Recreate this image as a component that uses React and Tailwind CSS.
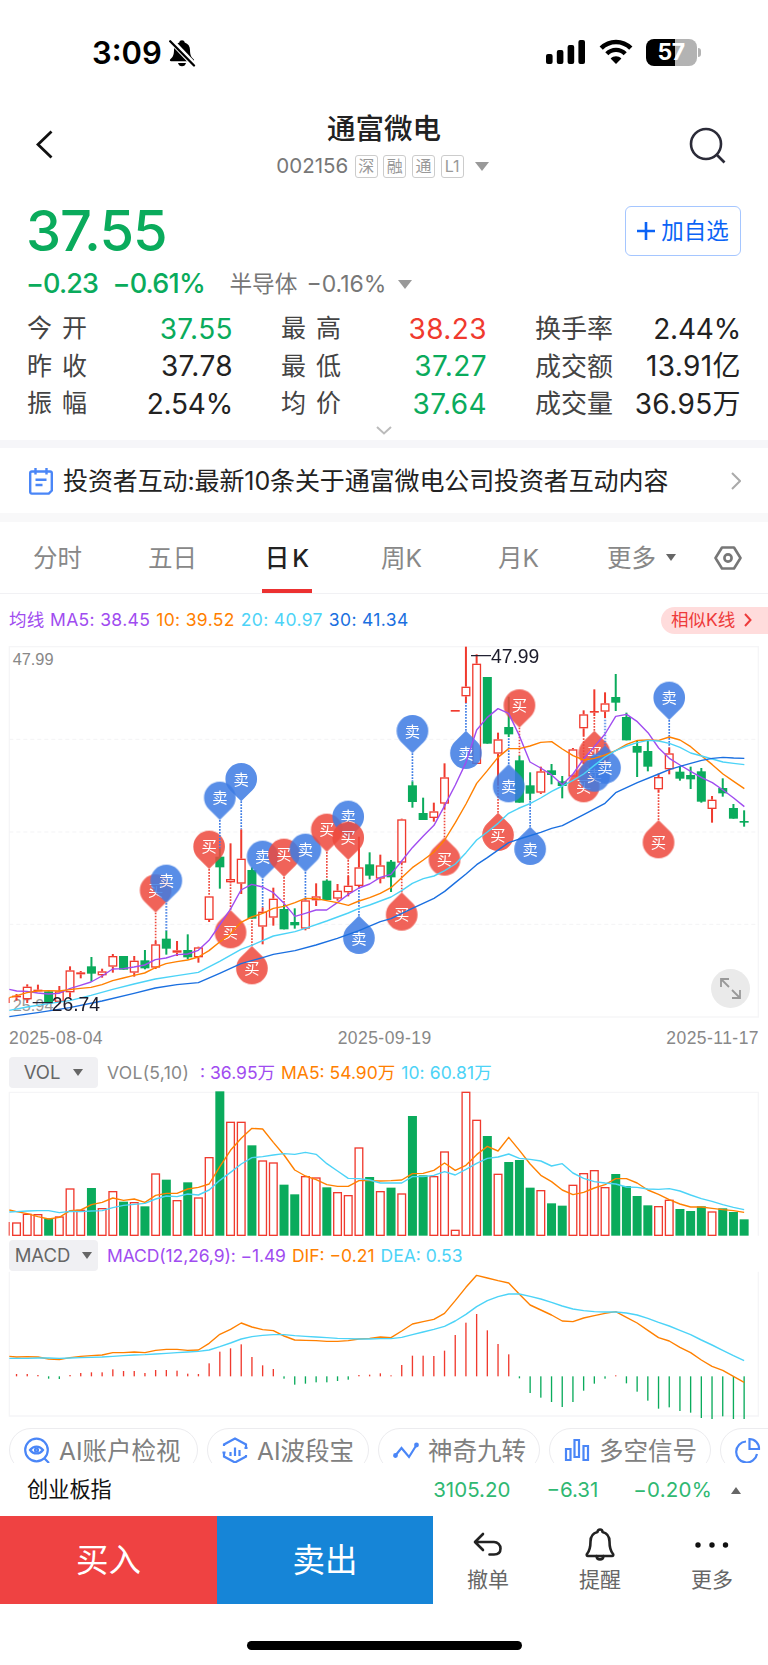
import React from 'react';

const UP = '#f03a2e';
const DOWN = '#0aab5c';

// All chart coordinates are in thirds of a pixel
const xAt = (i) => 49.6 + 32.1 * i;

// [direction, high, body top, body bottom, low, volume top]
const candles = [
  ['u', 1062, 1067, 1072, 1082, 608], ['u', 1033, 1040, 1078, 1089, 582], ['u', 1034, 1049, 1054, 1054, 583],
  ['d', 1054, 1054, 1089, 1089, 595], ['u', 1038, 1054, 1086, 1092, 590], ['u', 979, 991, 1057, 1072, 506],
  ['u', 993, 997, 1003, 1015, 570], ['d', 951, 979, 1001, 1025, 504], ['u', 986, 994, 1006, 1013, 565],
  ['u', 942, 948, 980, 998, 514], ['d', 948, 948, 989, 989, 545], ['u', 948, 962, 998, 1010, 547],
  ['d', 930, 961, 985, 988, 559], ['u', 903, 913, 983, 987, 461], ['d', 872, 896, 926, 944, 479],
  ['u', 903, 931, 938, 948, 541], ['d', 883, 930, 952, 958, 487], ['u', 920, 922, 952, 968, 533],
  ['u', 769, 769, 840, 846, 412], ['d', 625, 650, 682, 746, 214], ['u', 610, 717, 727, 730, 306],
  ['u', 568, 656, 731, 762, 306], ['d', 682, 690, 836, 836, 376], ['u', 802, 815, 860, 913, 422],
  ['u', 743, 776, 833, 857, 428], ['d', 795, 807, 868, 868, 494], ['d', 805, 846, 856, 866, 523],
  ['u', 776, 781, 866, 871, 469], ['u', 730, 769, 781, 798, 473], ['d', 718, 722, 780, 780, 502],
  ['u', 732, 752, 776, 782, 517], ['u', 708, 737, 757, 769, 526], ['u', 590, 682, 738, 743, 383],
  ['d', 637, 673, 707, 718, 471], ['u', 644, 676, 716, 730, 514], ['d', 660, 665, 712, 756, 503],
  ['u', 536, 538, 668, 672, 521], ['d', 424, 436, 486, 503, 288], ['d', 473, 519, 540, 540, 466],
  ['u', 488, 514, 534, 545, 469], ['u', 370, 412, 491, 509, 395], ['u', 210, 210, 213, 213, 630],
  ['u', 20, 140, 169, 189, 216], ['u', 43, 71, 372, 372, 300], ['d', 111, 111, 311, 311, 348],
  ['u', 278, 298, 341, 437, 462], ['d', 170, 261, 283, 291, 426], ['d', 347, 361, 488, 488, 420],
  ['d', 397, 436, 461, 481, 503], ['u', 380, 394, 458, 462, 511], ['d', 372, 391, 405, 433, 550],
  ['d', 408, 424, 438, 475, 557], ['u', 324, 328, 410, 410, 495], ['u', 211, 223, 265, 289, 460],
  ['u', 148, 213, 218, 228, 451], ['u', 157, 190, 215, 234, 502], ['d', 102, 171, 188, 213, 462],
  ['d', 218, 231, 301, 301, 498], ['d', 303, 318, 338, 411, 528], ['d', 300, 333, 380, 394, 556],
  ['u', 401, 411, 448, 458, 559], ['u', 322, 340, 388, 403, 540], ['d', 380, 395, 416, 422, 567],
  ['d', 380, 405, 418, 447, 573], ['d', 384, 394, 485, 488, 559], ['u', 468, 479, 507, 548, 575],
  ['d', 415, 444, 460, 470, 565], ['d', 492, 504, 536, 536, 576], ['d', 511, 543, 548, 560, 598],
];

const ma5 = '28,1048 50,1053 81,1054 113,1059 145,1062 177,1060 209,1046 241,1036 273,1026 306,1008 338,987 370,986 402,981 434,975 466,959 498,954 531,944 563,942 595,931 627,901 659,855 691,808 723,750 755,733 788,741 820,758 852,790 885,829 916,820 948,810 980,810 1012,788 1045,763 1077,744 1109,732 1141,712 1173,703 1205,663 1237,623 1270,588 1302,556 1334,497 1366,435 1398,367 1430,270 1462,232 1494,206 1526,220 1558,287 1590,366 1622,384 1654,404 1687,434 1719,402 1751,357 1783,320 1815,282 1847,229 1880,223 1912,245 1944,278 1976,324 2008,355 2040,375 2072,394 2105,413 2137,428 2169,450 2201,474 2233,500';
const ma10 = '28,1073 50,1067 81,1058 113,1053 145,1052 177,1053 209,1049 241,1045 273,1042 306,1034 338,1022 370,1014 402,1006 434,999 466,983 498,971 531,965 563,960 595,951 627,932 659,906 691,882 723,847 755,831 788,820 820,805 852,799 885,788 916,775 948,776 980,782 1012,788 1045,796 1077,783 1109,773 1141,760 1173,743 1205,713 1237,683 1270,660 1302,636 1334,600 1366,548 1398,492 1430,430 1462,392 1494,352 1526,326 1558,326 1590,318 1622,307 1655,305 1687,327 1719,347 1751,360 1783,355 1815,345 1847,332 1880,313 1912,301 1944,300 1976,301 2008,291 2040,300 2072,320 2105,348 2137,374 2169,402 2201,424 2233,446';
const ma20 = '28,1111 81,1101 145,1091 209,1082 273,1066 338,1048 402,1032 466,1017 531,1007 595,997 659,964 723,928 755,916 820,888 885,875 916,865 980,843 1045,819 1077,805 1109,795 1173,771 1205,752 1237,730 1270,716 1302,708 1334,692 1366,672 1398,638 1430,600 1462,576 1494,550 1526,520 1558,504 1590,491 1622,474 1655,454 1687,438 1719,421 1751,402 1783,376 1815,351 1847,332 1880,318 1912,308 1944,301 1976,303 2008,310 2040,322 2072,339 2105,348 2137,357 2169,366 2201,370 2233,374';
const ma30 = '28,1130 113,1118 209,1103 306,1083 402,1060 466,1044 531,1034 595,1028 659,1000 723,971 788,953 820,943 885,932 948,915 1012,895 1077,872 1141,845 1173,836 1237,805 1302,775 1334,754 1366,728 1398,702 1430,674 1462,653 1526,608 1558,597 1622,577 1655,565 1687,557 1751,524 1815,490 1847,458 1912,428 1976,402 2008,389 2040,379 2072,370 2105,361 2137,355 2169,352 2201,354 2233,355';

// [candle index, buy / sell, tip y, points up, y where the dotted line ends]
const pins = [
  [13, 'b', 818, 0, 903], [14, 's', 789, 0, 872], [18, 'b', 687, 0, 769], [19, 's', 540, 0, 625],
  [20, 'b', 810, 1, 730], [21, 's', 484, 0, 568], [22, 'b', 918, 1, 836], [23, 's', 717, 0, 802],
  [25, 'b', 711, 0, 795], [27, 's', 696, 0, 780], [29, 'b', 636, 0, 718], [31, 's', 597, 0, 597],
  [31, 'b', 660, 0, 708], [32, 's', 827, 1, 743], [36, 'b', 757, 1, 672], [37, 's', 340, 0, 424],
  [40, 'b', 592, 1, 509], [42, 's', 272, 1, 189], [45, 'b', 518, 1, 437], [46, 's', 372, 1, 291],
  [47, 'b', 263, 0, 347], [48, 's', 560, 1, 481], [53, 'b', 372, 1, 289], [54, 'b', 272, 1, 228],
  [54, 's', 340, 1, 340], [55, 's', 316, 1, 234], [60, 'b', 540, 1, 458], [61, 's', 240, 0, 322],
];

const volMa5 = [575, 581, 590, 597, 592, 572, 570, 554, 547, 534, 541, 537, 547, 526, 520, 520, 507, 502, 492, 440, 391, 355, 325, 327, 367, 405, 450, 468, 479, 494, 499, 499, 482, 482, 483, 482, 480, 461, 460, 451, 429, 451, 436, 404, 379, 393, 352, 391, 432, 466, 485, 510, 524, 517, 504, 494, 476, 476, 489, 510, 523, 539, 552, 561, 561, 565, 569, 572, 577];
const volMa10 = [575, 573, 572, 572, 578, 574, 575, 573, 572, 563, 556, 553, 550, 537, 528, 530, 522, 525, 510, 481, 457, 432, 413, 410, 405, 401, 403, 397, 403, 431, 453, 475, 476, 480, 489, 489, 489, 470, 470, 466, 455, 465, 448, 430, 415, 411, 402, 415, 418, 423, 438, 431, 459, 475, 485, 489, 492, 501, 502, 507, 508, 506, 513, 525, 536, 544, 554, 562, 569];
const macd = [402, 402, 405, 416, 417, 405, 399, 397, 397, 388, 393, 393, 399, 390, 390, 392, 401, 402, 370, 335, 325, 313, 351, 376, 387, 416, 434, 431, 427, 427, 423, 419, 405, 404, 400, 406, 375, 347, 347, 348, 332, 285, 248, 222, 271, 312, 343, 415, 459, 473, 486, 501, 486, 452, 431, 416, 406, 430, 455, 482, 506, 502, 513, 518, 534, 537, 529, 537, 537];
const dif = [351, 350, 351, 357, 359, 353, 349, 347, 345, 338, 338, 336, 338, 331, 328, 328, 331, 330, 310, 283, 268, 249, 261, 269, 272, 288, 300, 301, 302, 304, 304, 302, 297, 295, 291, 293, 273, 252, 245, 238, 220, 182, 142, 106, 114, 122, 129, 163, 195, 210, 225, 243, 245, 234, 227, 220, 215, 232, 249, 271, 293, 303, 322, 338, 360, 379, 391, 409, 427];
const dea = [355, 355, 354, 354, 355, 354, 353, 352, 351, 349, 347, 345, 344, 342, 340, 338, 336, 334, 330, 320, 309, 297, 290, 286, 284, 284, 287, 289, 291, 293, 295, 296, 297, 297, 296, 296, 292, 284, 276, 268, 259, 243, 223, 200, 182, 170, 162, 162, 169, 177, 187, 198, 207, 212, 215, 216, 216, 219, 225, 235, 247, 258, 271, 284, 300, 315, 331, 347, 362];

const toPoints = (first, values) => `28,${first} ` + values.map((v, i) => `${xAt(i)},${v}`).join(' ');

function Line({ points, color }) {
  return <polyline points={points} fill="none" stroke={color} strokeWidth="4.2" strokeLinejoin="round" />;
}

function Caret({ className, up }) {
  return (
    <svg className={className} viewBox="0 0 14 9" preserveAspectRatio="none">
      <path d={up ? 'M7 0l7 9H0z' : 'M0 0h14L7 9z'} fill="currentColor" />
    </svg>
  );
}

function StatusBar() {
  return (
    <div className="flex h-[100px] items-start justify-between pl-[92px] pr-[67px] pt-[38px]">
      <div className="flex items-center gap-[6px]">
        <span className="mt-px text-[31px] font-semibold leading-7">3:09</span>
        <svg className="h-7 w-7" viewBox="0 0 28 28">
          <path d="M14 1.2c1.400 0 2.500.9 2.700 2.200 3.500 1.100 5.300 4 5.300 7.600 0 5.400 1.500 7.400 3.700 9.300.8.800.4 2-.8 2H3.100c-1.200 0-1.600-1.200-.8-2C4.500 18.400 6 16.400 6 11c0-3.600 1.800-6.500 5.300-7.600C11.500 2.100 12.600 1.200 14 1.200zM10 24h8c-.4 2-2 3.300-4 3.300S10.400 26 10 24z" />
          <path d="M3.600 2.200l22.800 24" stroke="#fff" strokeWidth="5.600" />
          <path d="M2.200 2.200l23.800 24.300" stroke="#000" strokeWidth="2.300" strokeLinecap="round" />
        </svg>
      </div>
      <div className="flex items-center">
        <svg className="h-7 w-[40px]" viewBox="0 0 40 28">
          <rect x="0" y="16" width="6.600" height="10" rx="2" />
          <rect x="10.800" y="12" width="6.600" height="14" rx="2" />
          <rect x="21.600" y="7" width="6.600" height="19" rx="2" />
          <rect x="32.400" y="2" width="6.600" height="24" rx="2" />
        </svg>
        <svg className="ml-[13px] h-7 w-[34px]" viewBox="0 0 34 28">
          <path d="M2.200 10.200C10.500 1.900 23.500 1.900 31.800 10.200" fill="none" stroke="#000" strokeWidth="4.600" />
          <path d="M7.800 15.800c5.200-5.200 13.200-5.200 18.400 0" fill="none" stroke="#000" strokeWidth="4.400" />
          <path d="M17 26l-5.400-5.600c3-2.800 7.800-2.800 10.800 0z" />
        </svg>
        <div className="ml-[13px] flex h-[27px] w-[51px] items-center justify-center rounded-[8px] bg-linear-to-r from-black from-57% to-[#b3b3b3] to-57% text-[23px] font-bold leading-none tracking-[-0.5px] text-white">
          57
        </div>
        <div className="ml-[1.500px] h-[9px] w-[3px] rounded-r-full bg-[#b3b3b3]" />
      </div>
    </div>
  );
}

function Header() {
  return (
    <header className="flex h-[90px] justify-between px-[36px]">
      <div className="w-[43px]">
        <svg className="mt-[30px] h-[30px] w-[18px]" viewBox="0 0 18 30" fill="none" stroke="#111" strokeWidth="2.800">
          <path d="M15.500 1.500L2 14.500l13.500 13" />
        </svg>
      </div>
      <div className="flex flex-col items-center">
        <h1 className="mt-[11px] text-[28.500px] font-medium leading-[36px] text-[#222]">通富微电</h1>
        <div className="mr-[3px] mt-[7px] flex items-center text-[#999]">
          <span className="mr-[6.500px] text-[20.500px] leading-6 text-[#777]">002156</span>
          <div className="flex gap-[5.700px]">
            {['深', '融', '通', 'L1'].map((tag) => (
              <span key={tag} className="flex h-[23px] w-[23px] items-center justify-center rounded-[3px] border border-[#ccc] text-[16px] leading-none">
                {tag}
              </span>
            ))}
          </div>
          <Caret className="ml-[11px] h-[9px] w-[14px]" />
        </div>
      </div>
      <svg className="mt-[27px] mr-[5px] h-[38px] w-[38px]" viewBox="0 0 38 38" fill="none" stroke="#2b2b38" strokeWidth="2.600">
        <circle cx="17" cy="17" r="15" />
        <path d="M27.500 27.500l8 8" />
      </svg>
    </header>
  );
}

const quotes = [
  ['今开', '37.55', 'text-[#0aab5c]'], ['最高', '38.23', 'text-[#f03a2e]'], ['换手率', '2.44%', 'text-[#222]'],
  ['昨收', '37.78', 'text-[#222]'], ['最低', '37.27', 'text-[#0aab5c]'], ['成交额', '13.91亿', 'text-[#222]'],
  ['振幅', '2.54%', 'text-[#222]'], ['均价', '37.64', 'text-[#0aab5c]'], ['成交量', '36.95万', 'text-[#222]'],
];

function Quote() {
  return (
    <section className="h-[250px] pl-[27px] pr-[27px]">
      <div className="flex h-[67px] items-start justify-between">
        <div className="-ml-px mt-[13px] text-[56px] font-medium leading-[56px] tracking-[-1px] text-[#0aab5c]">37.55</div>
        <button className="mt-[16px] flex h-[50px] w-[116px] items-center justify-center gap-[6px] rounded-[6px] border-[1.500px] border-[#a5c6ff] text-[22.500px] text-[#0b63f6]">
          <svg className="h-[18px] w-[18px]" viewBox="0 0 18 18" stroke="currentColor" strokeWidth="2.600">
            <path d="M9 0v18M0 9h18" />
          </svg>
          <span>加自选</span>
        </button>
      </div>
      <div className="flex h-[53px] items-center pt-[2px] text-[#777]">
        <span className="-ml-px text-[27px] font-medium tracking-[-0.900px] text-[#0aab5c]">−0.23</span>
        <span className="ml-[14.500px] text-[27px] font-medium tracking-[-0.800px] text-[#0aab5c]">−0.61%</span>
        <span className="ml-[24.500px] text-[22.700px]">半导体</span>
        <span className="ml-[9px] text-[23px]">−0.16%</span>
        <Caret className="ml-[12px] h-[9px] w-[14px] text-[#999]" />
      </div>
      <div className="grid grid-cols-3 gap-x-12">
        {quotes.map(([label, value, color]) => (
          <div key={label} className="flex h-[37.500px] items-center justify-between">
            <span className={label.length === 2 ? 'text-[25px] tracking-[10px] text-[#444]' : 'text-[26px] text-[#444]'}>{label}</span>
            <span className={`text-[28px] ${value.includes('%') ? 'tracking-[-0.200px]' : 'tracking-[0.400px]'} ${color}`}>{value}</span>
          </div>
        ))}
      </div>
      <svg className="mx-auto mt-[3px] h-[9px] w-4" viewBox="0 0 16 9" fill="none" stroke="#bbb" strokeWidth="2">
        <path d="M1 1l7 6.500L15 1" />
      </svg>
    </section>
  );
}

function NewsRow() {
  return (
    <div className="flex h-[65px] items-center pl-[29px] pr-[27px]">
      <svg className="h-7 w-6" viewBox="0 0 24 28" fill="none" stroke="#4a86f7" strokeWidth="2.400">
        <path d="M2.800 4.500h18.400A1.600 1.600 0 0 1 22.800 6v17.500l-3 3.100h-17A1.600 1.600 0 0 1 1.200 25V6a1.600 1.600 0 0 1 1.600-1.500zM6.500 1v6.500M17.500 1v6.500M6.500 12.800h11M6.500 18h7" />
      </svg>
      <span className="ml-[10px] mt-[2px] text-[25px] tracking-[-0.110px] text-[#222]">投资者互动:最新10条关于通富微电公司投资者互动内容</span>
      <svg className="ml-auto h-[18px] w-[10px]" viewBox="0 0 10 18" fill="none" stroke="#aaa" strokeWidth="2">
        <path d="M1 1l8 8-8 8" />
      </svg>
    </div>
  );
}

function Tabs() {
  return (
    <nav className="flex h-[72px] items-center border-b border-[#f1f1f4] pl-[33px] pr-[26px] text-[24.500px] text-[#888]">
      <span className="mt-[2px] w-[115px]">分时</span>
      <span className="mt-[2px] w-[114px]">五日</span>
      <span className="relative flex h-full w-[50px] items-center justify-center gap-[3px] pt-[2px] font-medium text-[#222]">
        日<span>K</span>
        <i className="absolute bottom-0 left-0 h-1 w-[50px] bg-[#ec3131]" />
      </span>
      <span className="ml-[69px] mt-[2px] w-[117px]">周K</span>
      <span className="mt-[2px] w-[109px]">月K</span>
      <span className="mt-[2px]">更多</span>
      <Caret className="ml-[10px] h-[7px] w-[10px] text-[#666]" />
      <svg className="ml-auto h-6 w-7" viewBox="0 0 28 24" fill="none" stroke="#777" strokeWidth="2.600" strokeLinejoin="round">
        <path d="M8 1.500h12L26.500 12 20 22.500H8L1.500 12z" />
        <circle cx="14" cy="12" r="3.600" />
      </svg>
    </nav>
  );
}

function MaRow() {
  return (
    <div className="flex h-[46px] items-center justify-between pl-[9px] pt-[6px] text-[17.500px]">
      <div className="mt-px flex gap-[6px] tracking-[0.350px]">
        <span className="text-[#a04cf0]">均线 MA5: 38.45</span>
        <span className="text-[#ff8000]">10: 39.52</span>
        <span className="text-[#4cd3f7]">20: 40.97</span>
        <span className="text-[#1a6fe0]">30: 41.34</span>
      </div>
      <div className="flex h-[27px] w-[107px] items-center rounded-l-full bg-[#ffdcdc] pl-[10px] text-[17.500px] text-[#ee3a3a]">
        相似K线
        <svg className="ml-[9px] h-[14px] w-2" viewBox="0 0 8 14" fill="none" stroke="currentColor" strokeWidth="2">
          <path d="M1 1l5.500 6L1 13" />
        </svg>
      </div>
    </div>
  );
}

function Pin({ index, kind, tip, up, end }) {
  const x = xAt(index);
  const color = kind === 'b' ? '#ee4a3e' : '#3e7ce4';
  const cy = up ? tip + 67 : tip - 67;
  return (
    <g>
      <line x1={x} y1={tip} x2={x} y2={end} stroke={color} strokeWidth="5" strokeDasharray="5 4" />
      <g opacity="0.86" fill={color}>
        <path transform={`translate(${x} ${cy}) scale(1 ${up ? -1 : 1})`} d="M0 67L-33.500 33.500A47.500 47.500 0 1 1 33.500 33.500z" />
        <text x={x} y={cy + 17} fontSize="46" fill="#fff" textAnchor="middle" fontFamily="'Noto Sans CJK SC', sans-serif">
          {kind === 'b' ? '买' : '卖'}
        </text>
      </g>
    </g>
  );
}

function PriceChart() {
  return (
    <div className="relative">
      <svg className="block h-[380px] w-full" viewBox="0 0 2304 1140" fontFamily="'Liberation Sans', sans-serif">
        <rect x="28" y="20" width="2247" height="1111" fill="none" stroke="#f5f5f7" strokeWidth="4" />
        {[298, 576, 853].map((y) => (
          <line key={y} x1="28" y1={y} x2="2276" y2={y} stroke="#f3f3f5" strokeWidth="3" strokeDasharray="12 9" />
        ))}
        <text x="38" y="75" fontSize="49" fill="#888">47.99</text>
        <text x="38" y="1113" fontSize="49" fill="#999">25.94</text>
        <rect x="26" y="1073" width="3" height="16" fill={UP} />
        {candles.map(([dir, high, top, bottom, low], i) => {
          const x = xAt(i);
          const h = bottom - top;
          if (dir === 'd') {
            return (
              <g key={i} fill={DOWN}>
                <rect x={x - 3} y={high} width="6" height={low - high} />
                <rect x={x - 13.500} y={top} width="27" height={h} />
              </g>
            );
          }
          return (
            <g key={i} fill={UP}>
              <rect x={x - 3} y={high} width="6" height={Math.max(top - high, 0)} />
              <rect x={x - 3} y={bottom} width="6" height={Math.max(low - bottom, 0)} />
              {h < 9 ? (
                <rect x={x - 13.500} y={top} width="27" height={Math.max(h, 5)} />
              ) : (
                <rect x={x - 11.500} y={top + 2} width="23" height={h - 4} fill="#fff" stroke={UP} strokeWidth="4" />
              )}
            </g>
          );
        })}
        {pins.map(([index, kind, tip, up, end], n) => (
          <Pin key={n} index={index} kind={kind} tip={tip} up={up} end={end} />
        ))}
        <Line points={ma5} color="#a04cf0" />
        <Line points={ma10} color="#ff8000" />
        <Line points={ma20} color="#4cd3f7" />
        <Line points={ma30} color="#1a6fe0" />
        <path d="M1413 47h60M98 1088h60" stroke="#223" strokeWidth="4" />
        <text x="1473" y="69" fontSize="58" fill="#1c1c2b">47.99</text>
        <text x="155" y="1113" fontSize="58" fill="#1c1c2b">26.74</text>
      </svg>
      <button className="absolute left-[711px] top-[329px] flex h-[39px] w-[39px] items-center justify-center rounded-full bg-[#eaeaea]">
        <svg className="h-[21px] w-[21px]" viewBox="0 0 21 21" fill="none" stroke="#999" strokeWidth="1.800">
          <path d="M1 9V1h8M1 1l8 8M20 12v8h-8M20 20l-8-8" />
        </svg>
      </button>
    </div>
  );
}

function IndicatorHead({ name, caret, children }) {
  return (
    <div className="flex h-[31px] items-center pl-[9px] text-[17.500px]">
      <button className="flex h-[31px] w-[89px] items-center justify-center rounded-[4px] bg-[#f0f0f3] text-[18.500px] text-[#666]">
        <span className="mt-px">{name}</span>
        <Caret className={caret} />
      </button>
      <div className="ml-[9px] mt-[2px] flex gap-[6px] whitespace-pre">{children}</div>
    </div>
  );
}

function VolumeChart() {
  return (
    <svg className="block h-[148px] w-full" viewBox="0 210 2304 444">
      <path d="M28 647V217H2275V647" fill="none" stroke="#f5f5f7" strokeWidth="4" />
      <rect x="26" y="606" width="3" height="41" fill={UP} />
      {candles.map(([dir, , , , , top], i) =>
        dir === 'd' ? (
          <rect key={i} x={xAt(i) - 13.500} y={top} width="27" height={647 - top} fill={DOWN} />
        ) : (
          <rect key={i} x={xAt(i) - 11.500} y={top + 1} width="23" height={645 - top} fill="#fff" stroke={UP} strokeWidth="4" />
        )
      )}
      <Line points={toPoints(570, volMa5)} color="#ff8000" />
      <Line points={toPoints(576, volMa10)} color="#4cd3f7" />
    </svg>
  );
}

function MacdChart() {
  return (
    <svg className="block h-[150px] w-full" viewBox="0 93 2304 450">
      <path d="M28 95V528H2275V95" fill="none" stroke="#f5f5f7" strokeWidth="4" />
      {macd.map((v, i) => (
        <rect key={i} x={xAt(i) - 2} y={Math.min(v, 409)} width="4" height={Math.abs(v - 409)} fill={v < 409 ? UP : DOWN} />
      ))}
      <Line points={toPoints(349, dif)} color="#ff8000" />
      <Line points={toPoints(355, dea)} color="#4cd3f7" />
    </svg>
  );
}

const tools = [
  {
    name: 'AI账户检视',
    width: 'w-[189px]',
    icon: (
      <>
        <circle cx="12.500" cy="13" r="11.300" />
        <path d="M20 21l5 5M6 13c3.500-4.600 9.500-4.600 13 0-3.500 4.600-9.500 4.600-13 0z" />
        <circle cx="12.500" cy="13" r="1.500" />
      </>
    ),
  },
  {
    name: 'AI波段宝',
    width: 'w-[162px]',
    icon: (
      <>
        <path d="M2 9V7.500L13 1.500l11 6V11M2 15v4.500l11 6 11-6V18" />
        <path d="M8.500 15v4M13 10.500V19M17.500 13v6M.5 15.500h3M22.500 11h3" />
      </>
    ),
  },
  {
    name: '神奇九转',
    width: 'w-[162px]',
    icon: (
      <>
        <path d="M2 19l6.500-8 7.500 9L23.500 8" />
        <circle cx="2.500" cy="18.500" r="1.300" fill="currentColor" />
        <circle cx="23.500" cy="8" r="1.300" fill="currentColor" />
      </>
    ),
  },
  {
    name: '多空信号',
    width: 'w-[162px]',
    icon: <path d="M2 12h4.500v11H2zM10.500 3H15v17h-4.500zM19.500 9H24v14h-4.500z" />,
  },
  {
    name: '',
    width: 'w-[162px]',
    icon: (
      <>
        <path d="M11 4.500A10.500 10.500 0 1 0 22 17" />
        <path d="M14.500 2a9.500 9.500 0 0 1 9.500 10h-9.500z" />
      </>
    ),
  },
];

function ToolChips() {
  return (
    <div className="flex h-[42px] gap-[9px] overflow-hidden pl-[9px] pt-[7px]">
      {tools.map((tool, i) => (
        <div key={i} className={`flex h-[44px] shrink-0 items-center gap-[9px] whitespace-nowrap rounded-full border border-[#ececef] pl-[14px] text-[24.500px] text-[#808080] ${tool.width}`}>
          <svg className="h-[27px] w-[26px] shrink-0 text-[#4a86f7]" viewBox="0 0 26 27" fill="none" stroke="currentColor" strokeWidth="2.200">
            {tool.icon}
          </svg>
          <span className="mt-[2px]">{tool.name}</span>
        </div>
      ))}
    </div>
  );
}

function IndexBar() {
  return (
    <div className="flex h-[53px] items-center pl-[27px] pr-[27px] pt-px text-[20.500px] text-[#2fb872]">
      <span className="mr-auto text-[21.200px] text-[#111]">创业板指</span>
      <span>3105.20</span>
      <span className="ml-[36px]">−6.31</span>
      <span className="ml-[35px] tracking-[0.200px]">−0.20%</span>
      <Caret up className="ml-[19px] h-[7px] w-[10px] text-[#666]" />
    </div>
  );
}

function ActionBar() {
  const actions = [
    {
      label: '撤单',
      icon: <path d="M11 6L3 14l8 8M3.500 14h18.500a6.500 6.500 0 0 1 6.500 6.500c0 4-2.500 6-6.500 6h-4.500" />,
    },
    {
      label: '提醒',
      icon: (
        <>
          <path d="M13.500 4a2.500 2.500 0 0 1 5 0c5 1.300 7 5 7 9.500 0 7 1 9.500 3.500 12.500.6 1 .2 2-1 2H4c-1.200 0-1.600-1-1-2 2.500-3 3.500-5.500 3.500-12.500 0-4.500 2-8.200 7-9.500z" />
          <path d="M12.500 28c.5 4.500 6.500 4.500 7 0" />
        </>
      ),
    },
    {
      label: '更多',
      icon: (
        <g fill="#111" stroke="none">
          <circle cx="2" cy="17" r="2.700" />
          <circle cx="16" cy="17" r="2.700" />
          <circle cx="29.500" cy="17" r="2.700" />
        </g>
      ),
    },
  ];
  return (
    <div className="flex h-[88px] text-[32.500px] text-white">
      <button className="w-[217px] shrink-0 bg-[#ef4242] pt-[2px]">买入</button>
      <button className="w-[216px] shrink-0 bg-[#1685d7] pt-[2px]">卖出</button>
      <div className="-ml-px flex min-w-0 flex-1">
        {actions.map((a) => (
          <div key={a.label} className="flex w-[112px] shrink-0 flex-col items-center pt-[12px]">
            <svg className="h-[34px] w-8 overflow-visible" viewBox="0 0 32 34" fill="none" stroke="#222" strokeWidth="2.600" strokeLinejoin="round" strokeLinecap="round">
              {a.icon}
            </svg>
            <span className="mt-[4px] text-[21px] leading-7 text-[#666]">{a.label}</span>
          </div>
        ))}
      </div>
    </div>
  );
}

export default function App() {
  return (
    <div className="h-[1665px] w-[768px] overflow-hidden bg-white font-[Inter,'Noto_Sans_CJK_SC',sans-serif] text-black">
      <StatusBar />
      <Header />
      <Quote />
      <div className="h-2 bg-[#f6f6f9]" />
      <NewsRow />
      <div className="h-[9px] bg-[#f8f8f9]" />
      <Tabs />
      <MaRow />
      <PriceChart />
      <div className="flex h-[37px] items-center justify-between pl-[9px] pr-[9px] font-['Liberation_Sans',sans-serif] text-[17.500px] tracking-[0.450px] text-[#888]">
        <span>2025-08-04</span>
        <span>2025-09-19</span>
        <span>2025-11-17</span>
      </div>
      <IndicatorHead name="VOL" caret="ml-[13px] h-[7px] w-[10px]">
        <span className="tracking-[0.300px] text-[#888]">VOL(5,10)</span>
        <span className="ml-[5px] text-[#a04cf0]">: 36.95万</span>
        <span className="text-[#ff8000]">MA5: 54.90万</span>
        <span className="tracking-[0.100px] text-[#4cd3f7]">10: 60.81万</span>
      </IndicatorHead>
      <div className="h-[2px]" />
      <VolumeChart />
      <div className="h-[2px]" />
      <IndicatorHead name="MACD" caret="ml-[12px] h-[7px] w-[10px]">
        <span className="tracking-[-0.100px] text-[#a04cf0]">MACD(12,26,9): −1.49</span>
        <span className="text-[#ff8000]">DIF: −0.21</span>
        <span className="text-[#4cd3f7]">DEA: 0.53</span>
      </IndicatorHead>
      <MacdChart />
      <ToolChips />
      <IndexBar />
      <ActionBar />
      <div className="mx-auto mt-[37px] h-[9px] w-[275px] rounded-full bg-black" />
    </div>
  );
}
